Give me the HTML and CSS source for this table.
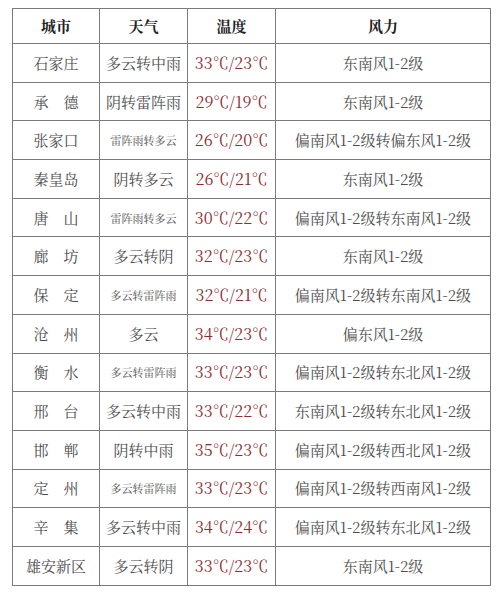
FILE: index.html
```html
<!DOCTYPE html>
<html lang="zh">
<head>
<meta charset="utf-8">
<link rel="stylesheet" href="styles.css">
</head>
<body>
<table class="weather">
  <colgroup>
    <col class="c-city"><col class="c-wx"><col class="c-temp"><col class="c-wind">
  </colgroup>
  <thead>
    <tr class="head"><th>城市</th><th>天气</th><th>温度</th><th>风力</th></tr>
  </thead>
  <tbody>
    <tr><td>石家庄</td><td>多云转中雨</td><td class="temp">33℃/23℃</td><td>东南风1-2级</td></tr>
    <tr><td>承　德</td><td>阴转雷阵雨</td><td class="temp">29℃/19℃</td><td>东南风1-2级</td></tr>
    <tr><td>张家口</td><td class="small">雷阵雨转多云</td><td class="temp">26℃/20℃</td><td>偏南风1-2级转偏东风1-2级</td></tr>
    <tr><td>秦皇岛</td><td>阴转多云</td><td class="temp">26℃/21℃</td><td>东南风1-2级</td></tr>
    <tr><td>唐　山</td><td class="small">雷阵雨转多云</td><td class="temp">30℃/22℃</td><td>偏南风1-2级转东南风1-2级</td></tr>
    <tr><td>廊　坊</td><td>多云转阴</td><td class="temp">32℃/23℃</td><td>东南风1-2级</td></tr>
    <tr><td>保　定</td><td class="small">多云转雷阵雨</td><td class="temp">32℃/21℃</td><td>偏南风1-2级转东南风1-2级</td></tr>
    <tr><td>沧　州</td><td>多云</td><td class="temp">34℃/23℃</td><td>偏东风1-2级</td></tr>
    <tr><td>衡　水</td><td class="small">多云转雷阵雨</td><td class="temp">33℃/23℃</td><td>偏南风1-2级转东北风1-2级</td></tr>
    <tr><td>邢　台</td><td>多云转中雨</td><td class="temp">33℃/22℃</td><td>东南风1-2级转东北风1-2级</td></tr>
    <tr><td>邯　郸</td><td>阴转中雨</td><td class="temp">35℃/23℃</td><td>偏南风1-2级转西北风1-2级</td></tr>
    <tr><td>定　州</td><td class="small">多云转雷阵雨</td><td class="temp">33℃/23℃</td><td>偏南风1-2级转西南风1-2级</td></tr>
    <tr><td>辛　集</td><td>多云转中雨</td><td class="temp">34℃/24℃</td><td>偏南风1-2级转东北风1-2级</td></tr>
    <tr><td>雄安新区</td><td>多云转阴</td><td class="temp">33℃/23℃</td><td>东南风1-2级</td></tr>
  </tbody>
</table>
</body>
</html>
```
FILE: styles.css
```css
html, body {
  margin: 0;
  padding: 0;
  background: #ffffff;
}
body {
  padding: 8px 0 0 12px;
  font-family: "Noto Serif CJK SC", "Liberation Serif", "Noto Sans CJK SC", serif;
  color: #4d4d4d;
}
.weather {
  border-collapse: collapse;
  table-layout: fixed;
  width: 478px;
}
.c-city { width: 87px; }
.c-wx { width: 88px; }
.c-temp { width: 88px; }
.c-wind { width: 215px; }
.weather tr {
  height: 38.7px;
}
.weather tr.head {
  height: 35px;
}
.weather th,
.weather td {
  border: 1.5px solid #7a7a7a;
  text-align: center;
  vertical-align: middle;
  padding: 0;
  font-size: 15px;
  line-height: 20px;
  white-space: nowrap;
  overflow: hidden;
}
.weather th {
  font-weight: bold;
  color: #222222;
}
.weather td.small {
  font-size: 11px;
}
.weather td.temp {
  color: #8a2c30;
  font-family: "Noto Serif CJK SC", "Liberation Serif", serif;
  font-size: 16px;
}
```
